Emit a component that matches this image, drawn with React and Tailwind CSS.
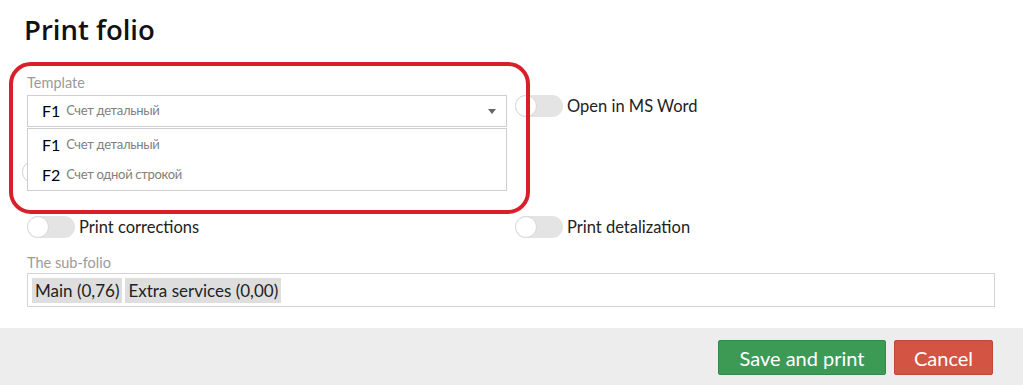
const Toggle = ({ className = "" }) => (
  <span className={`relative inline-block w-[48px] h-[22px] rounded-full bg-[#e4e4e4] shrink-0 ${className}`}>
    <span className="absolute left-0 top-0 w-[22px] h-[22px] rounded-full bg-white border border-[#d8d8d8]" />
  </span>
);

const Option = ({ code, name }) => (
  <div className="h-[30px] flex items-center px-[14px] gap-[6px]">
    <span className="text-[16px] text-black">{code}</span>
    <span className="text-[13px] text-[#808080] tracking-[-0.3px]">{name}</span>
  </div>
);

export default function App() {
  return (
    <div className="relative w-[1023px] h-[385px] bg-white overflow-hidden font-['Lato',sans-serif] text-[#222]">
      <h1 className="pl-[24px] pt-[9px] h-[62px] text-[27.5px] font-semibold text-[#111] font-['Open_Sans',sans-serif]">
        Print folio
      </h1>

      <div className="pl-[27px] pr-[28px]">
        {/* Template row */}
        <div className="grid grid-cols-[488px_1fr]">
          <div>
            <div className="h-[33px] pt-[12px] text-[14.5px] text-[#9a9a9a] leading-[18px]">Template</div>
            <div className="w-[480px] h-[32px] border border-[#cfcfcf] flex items-center px-[14px] gap-[6px]">
              <span className="text-[16px] text-black">F1</span>
              <span className="text-[13px] text-[#808080] tracking-[-0.3px]">Счет детальный</span>
              <span className="ml-auto mr-[-4px] w-0 h-0 border-l-[4px] border-r-[4px] border-t-[5px] border-l-transparent border-r-transparent border-t-[#666]" />
            </div>
          </div>
          <div className="pt-[33px] flex items-start gap-[4px]">
            <Toggle />
            <span className="text-[16.5px] leading-[23px]">Open in MS Word</span>
          </div>
        </div>

        {/* row under the open dropdown */}
        <div className="h-[56px] pt-[34px] flex items-start -ml-[5px]">
          <Toggle />
        </div>

        {/* corrections / detalization */}
        <div className="grid grid-cols-[488px_1fr] pt-[33px]">
          <div className="flex items-start gap-[4px]">
            <Toggle />
            <span className="text-[16.5px] leading-[23px]">Print corrections</span>
          </div>
          <div className="flex items-start gap-[4px]">
            <Toggle />
            <span className="text-[16.5px] leading-[23px]">Print detalization</span>
          </div>
        </div>

        {/* sub-folio */}
        <div className="pt-[15px] h-[34px] text-[14.5px] text-[#9a9a9a] leading-[18px]">The sub-folio</div>
        <div className="w-[968px] h-[34px] border border-[#d4d4d4] flex items-center gap-[3px] px-[4px]">
          <span className="h-[25px] px-[3px] bg-[#dedede] text-[17px] leading-[25px] text-[#222]">Main (0,76)</span>
          <span className="h-[25px] px-[3px] bg-[#dedede] text-[17px] leading-[25px] text-[#222]">Extra services (0,00)</span>
        </div>
      </div>

      {/* footer */}
      <div className="absolute left-0 right-0 bottom-0 h-[57px] bg-[#ededed] flex items-start justify-end gap-[8px] pt-[12px] pr-[30px]">
        <button className="w-[168px] h-[35px] rounded-[2px] bg-[#3d9a55] border border-[#348a4a] text-white text-[20px]">
          Save and print
        </button>
        <button className="w-[99px] h-[35px] rounded-[2px] bg-[#d35442] border border-[#c04838] text-white text-[20px]">
          Cancel
        </button>
      </div>

      {/* open dropdown */}
      <div className="absolute left-[27px] top-[128px] w-[480px] h-[63px] bg-white border border-[#cfcfcf] pt-[1px]">
        <Option code="F1" name="Счет детальный" />
        <Option code="F2" name="Счет одной строкой" />
      </div>

      {/* annotation frame */}
      <div className="absolute left-[9px] top-[62px] w-[521px] h-[152px] border-[4px] border-[#d9202a] rounded-[22px]" />
    </div>
  );
}
